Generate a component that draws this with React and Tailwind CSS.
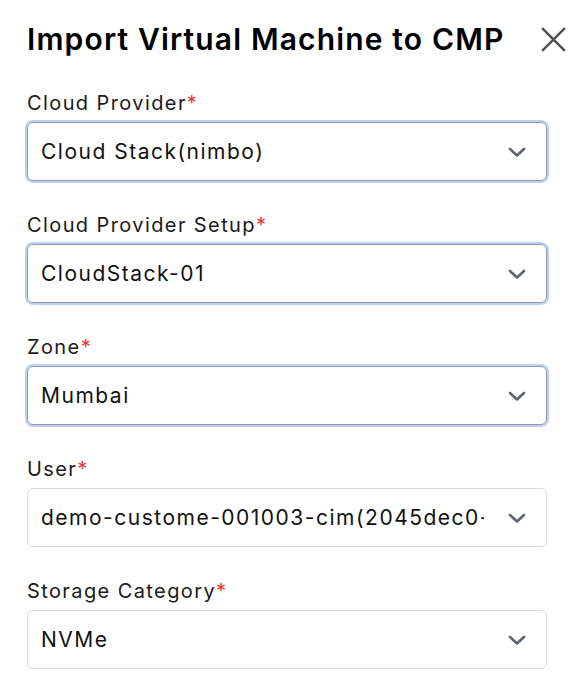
import React from "react";

const fields = [
  { label: "Cloud Provider", value: "Cloud Stack(nimbo)", focused: true },
  { label: "Cloud Provider Setup", value: "CloudStack-01", focused: true },
  { label: "Zone", value: "Mumbai", focused: true },
  { label: "User", value: "demo-custome-001003-cim(2045dec0-", focused: false },
  { label: "Storage Category", value: "NVMe", focused: false },
];

const Chevron = () => (
  <svg width="18" height="12" viewBox="0 0 18 12" fill="none" className="shrink-0">
    <path
      d="M2 3l7 6.5L16 3"
      stroke="#5f6472"
      strokeWidth="2.6"
      strokeLinecap="round"
      strokeLinejoin="round"
    />
  </svg>
);

const SelectField = ({ label, value, focused }) => (
  <div>
    <label className="block text-[20px] leading-[26px] tracking-[1.4px] text-[#1a1a1a] mb-[6px]">
      {label}
      <span className="text-[#e53935]">*</span>
    </label>
    <div
      className={
        focused
          ? "h-[59px] flex items-center justify-between pl-[13px] pr-[20px] rounded-[6px] border border-[#8f98a8] shadow-[0_0_0_2px_#bcd0f6]"
          : "h-[59px] flex items-center justify-between pl-[13px] pr-[20px] rounded-[6px] border border-[#d9dbe0]"
      }
    >
      <span className="text-[21px] tracking-[1.5px] text-[#111] whitespace-nowrap overflow-hidden mr-[24px]">
        {value}
      </span>
      <Chevron />
    </div>
  </div>
);

export default function App() {
  return (
    <div
      className="min-h-screen bg-white px-[27px] pt-[17px]"
      style={{ fontFamily: "Inter, 'Noto Sans', sans-serif" }}
    >
      <div className="w-[520px]">
        <div className="flex items-center justify-between mb-[28px]">
          <h1 className="text-[30px] font-semibold text-black tracking-[1.15px] whitespace-nowrap">
            Import Virtual Machine to CMP
          </h1>
          <button className="mr-[-19px] shrink-0">
            <svg width="25" height="25" viewBox="0 0 26 26">
              <path
                d="M2 2l22 22M24 2L2 24"
                stroke="#4d4d4d"
                strokeWidth="2.4"
                strokeLinecap="square"
              />
            </svg>
          </button>
        </div>
        <div className="flex flex-col gap-[31px]">
          {fields.map((f) => (
            <SelectField key={f.label} {...f} />
          ))}
        </div>
      </div>
    </div>
  );
}
